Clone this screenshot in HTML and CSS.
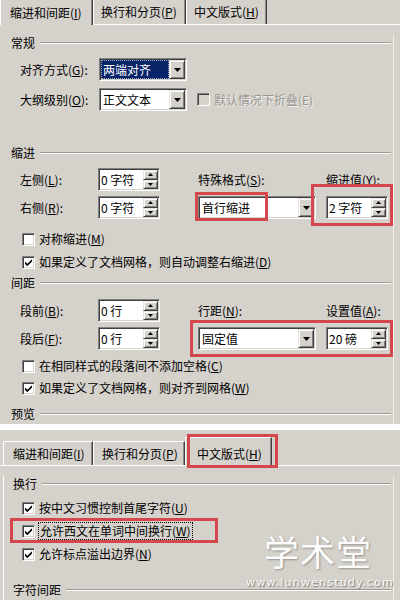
FILE: index.html
```html
<!DOCTYPE html>
<html lang="zh-CN">
<head>
    <meta charset="UTF-8">
    <meta name="viewport" content="width=device-width, initial-scale=1.0">
    <title>段落</title>
    <link rel="stylesheet" href="styles.css">
</head>
<body>
    <div class="dialog dialog-top">
        <div class="tabs tabs-cut">
            <div class="tab tab-first active"><span>缩进和间距(<u>I</u>)</span></div>
            <div class="tab tab-second"><span>换行和分页(<u>P</u>)</span></div>
            <div class="tab tab-third"><span>中文版式(<u>H</u>)</span></div>
        </div>
        <div class="page">
            <div class="group group-general">常规</div>
            <div class="general">
                <span class="label">对齐方式(<u>G</u>):</span>
                <div class="field select select-short">
                    <span class="value selected">两端对齐</span>
                    <span class="btn drop"><svg width="7" height="4" viewBox="0 0 7 4"><path d="M0 0h7L3.5 4z"/></svg></span>
                </div>
                <span></span>
                <span class="label">大纲级别(<u>O</u>):</span>
                <div class="field select select-short">
                    <span class="value">正文文本</span>
                    <span class="btn drop"><svg width="7" height="4" viewBox="0 0 7 4"><path d="M0 0h7L3.5 4z"/></svg></span>
                </div>
                <div class="check disabled"><span class="box"></span><span>默认情况下折叠(E)</span></div>
            </div>

            <div class="group group-indent">缩进</div>
            <div class="grid grid-indent">
                <span class="label c1">左侧(<u>L</u>):</span>
                <div class="field spin c2">
                    <span class="value">0 字符</span>
                    <span class="spin-btns">
                        <span class="btn"><svg width="5" height="3" viewBox="0 0 5 3"><path d="M0 3h5L2.5 0z"/></svg></span>
                        <span class="btn"><svg width="5" height="3" viewBox="0 0 5 3"><path d="M0 0h5L2.5 3z"/></svg></span>
                    </span>
                </div>
                <span class="label c4">特殊格式(<u>S</u>):</span>
                <span class="label c6">缩进值(<u>Y</u>):</span>

                <span class="label c1">右侧(<u>R</u>):</span>
                <div class="field spin c2">
                    <span class="value">0 字符</span>
                    <span class="spin-btns">
                        <span class="btn"><svg width="5" height="3" viewBox="0 0 5 3"><path d="M0 3h5L2.5 0z"/></svg></span>
                        <span class="btn"><svg width="5" height="3" viewBox="0 0 5 3"><path d="M0 0h5L2.5 3z"/></svg></span>
                    </span>
                </div>
                <div class="field select c4">
                    <span class="value">首行缩进</span>
                    <span class="btn drop"><svg width="7" height="4" viewBox="0 0 7 4"><path d="M0 0h7L3.5 4z"/></svg></span>
                </div>
                <div class="field spin c6">
                    <span class="value">2 字符</span>
                    <span class="spin-btns">
                        <span class="btn"><svg width="5" height="3" viewBox="0 0 5 3"><path d="M0 3h5L2.5 0z"/></svg></span>
                        <span class="btn"><svg width="5" height="3" viewBox="0 0 5 3"><path d="M0 0h5L2.5 3z"/></svg></span>
                    </span>
                </div>
            </div>
            <div class="checks checks-indent">
                <div class="check"><span class="box"></span><span>对称缩进(<u>M</u>)</span></div>
                <div class="check"><span class="box"><svg width="7" height="7" viewBox="0 0 7 7"><path d="M0 2.5l2.3 2.3L7 0.3v2.2L2.3 7.2 0 4.9z"/></svg></span><span>如果定义了文档网格，则自动调整右缩进(<u>D</u>)</span></div>
            </div>

            <div class="group group-spacing">间距</div>
            <div class="grid grid-spacing">
                <span class="label c1">段前(<u>B</u>):</span>
                <div class="field spin c2">
                    <span class="value">0 行</span>
                    <span class="spin-btns">
                        <span class="btn"><svg width="5" height="3" viewBox="0 0 5 3"><path d="M0 3h5L2.5 0z"/></svg></span>
                        <span class="btn"><svg width="5" height="3" viewBox="0 0 5 3"><path d="M0 0h5L2.5 3z"/></svg></span>
                    </span>
                </div>
                <span class="label c4">行距(<u>N</u>):</span>
                <span class="label c6">设置值(<u>A</u>):</span>

                <span class="label c1">段后(<u>F</u>):</span>
                <div class="field spin c2">
                    <span class="value">0 行</span>
                    <span class="spin-btns">
                        <span class="btn"><svg width="5" height="3" viewBox="0 0 5 3"><path d="M0 3h5L2.5 0z"/></svg></span>
                        <span class="btn"><svg width="5" height="3" viewBox="0 0 5 3"><path d="M0 0h5L2.5 3z"/></svg></span>
                    </span>
                </div>
                <div class="field select c4">
                    <span class="value">固定值</span>
                    <span class="btn drop"><svg width="7" height="4" viewBox="0 0 7 4"><path d="M0 0h7L3.5 4z"/></svg></span>
                </div>
                <div class="field spin c6">
                    <span class="value">20 磅</span>
                    <span class="spin-btns">
                        <span class="btn"><svg width="5" height="3" viewBox="0 0 5 3"><path d="M0 3h5L2.5 0z"/></svg></span>
                        <span class="btn"><svg width="5" height="3" viewBox="0 0 5 3"><path d="M0 0h5L2.5 3z"/></svg></span>
                    </span>
                </div>
            </div>
            <div class="checks checks-spacing">
                <div class="check"><span class="box"></span><span>在相同样式的段落间不添加空格(<u>C</u>)</span></div>
                <div class="check"><span class="box"><svg width="7" height="7" viewBox="0 0 7 7"><path d="M0 2.5l2.3 2.3L7 0.3v2.2L2.3 7.2 0 4.9z"/></svg></span><span>如果定义了文档网格，则对齐到网格(<u>W</u>)</span></div>
            </div>

            <div class="group group-preview">预览</div>
        </div>

        <div class="mark mark-special"></div>
        <div class="mark mark-value"></div>
        <div class="mark mark-line"></div>
    </div>

    <div class="dialog dialog-bottom">
        <div class="tabs">
            <div class="tab tab-first"><span>缩进和间距(<u>I</u>)</span></div>
            <div class="tab tab-second"><span>换行和分页(<u>P</u>)</span></div>
            <div class="tab tab-third active"><span>中文版式(<u>H</u>)</span></div>
        </div>
        <div class="page">
            <div class="group group-wrap">换行</div>
            <div class="checks checks-wrap">
                <div class="check"><span class="box"><svg width="7" height="7" viewBox="0 0 7 7"><path d="M0 2.5l2.3 2.3L7 0.3v2.2L2.3 7.2 0 4.9z"/></svg></span><span>按中文习惯控制首尾字符(<u>U</u>)</span></div>
                <div class="check"><span class="box"><svg width="7" height="7" viewBox="0 0 7 7"><path d="M0 2.5l2.3 2.3L7 0.3v2.2L2.3 7.2 0 4.9z"/></svg></span><span class="focus">允许西文在单词中间换行(<u>W</u>)</span></div>
                <div class="check"><span class="box"><svg width="7" height="7" viewBox="0 0 7 7"><path d="M0 2.5l2.3 2.3L7 0.3v2.2L2.3 7.2 0 4.9z"/></svg></span><span>允许标点溢出边界(<u>N</u>)</span></div>
            </div>
            <div class="group group-char">字符间距</div>
        </div>

        <div class="mark mark-tab"></div>
        <div class="mark mark-wrap"></div>

        <div class="watermark">
            <div class="watermark-title">学术堂</div>
            <div class="watermark-url">www.lunwenstudy.com</div>
        </div>
    </div>
</body>
</html>
```

FILE: styles.css
```css
body {
    margin: 0;
    width: 400px;
    background-color: white;
    font-family: "Noto Sans CJK SC", "Noto Sans", sans-serif;
    font-size: 12px;
    line-height: 16px;
    color: #000;
}

u {
    text-decoration: underline;
    text-underline-offset: 1px;
}

.dialog {
    position: relative;
    background-color: #d5d2cc;
    overflow: hidden;
}

.dialog-top {
    height: 424px;
}

.dialog-bottom {
    height: 170px;
    margin-top: 6px;
    padding-top: 7px;
    box-sizing: border-box;
}

/* tabs */

.tabs {
    display: flex;
    align-items: flex-end;
    height: 25px;
    box-shadow: inset 0 -1px #fff;
}

.dialog-bottom .tabs {
    height: 29px;
    padding-left: 3px;
}

.tab {
    box-sizing: border-box;
    height: 24px;
    margin-bottom: 1px;
    display: flex;
    align-items: center;
    white-space: nowrap;
    background-color: #d5d2cc;
    border-top: 1px solid #fff;
    border-left: 1px solid #fff;
    border-right: 1px solid #404040;
    box-shadow: inset -1px 0 #8d8a85;
}

.tabs-cut .tab {
    border-top: none;
}

.tab.active {
    height: 25px;
    margin-bottom: 0;
}

.dialog-bottom .tab.active {
    height: 29px;
    padding-top: 3px;
}

.tabs-cut .tab-first { width: 93px; padding-left: 9px; }
.tabs-cut .tab-second { width: 93px; padding-left: 7px; }
.tabs-cut .tab-third { width: 81px; padding-left: 7px; }

.dialog-bottom .tab-first { width: 90px; padding-left: 9px; }
.dialog-bottom .tab-second { width: 92px; padding-left: 8px; }
.dialog-bottom .tab-third { width: 87px; padding-left: 11px; }

/* page */

.page {
    margin-right: 6px;
    border-right: 1px solid #f0eee9;
    height: 100%;
}

.dialog-bottom .page {
    margin-left: 3px;
    border-left: 1px solid #fff;
}

.group {
    display: flex;
    align-items: center;
    height: 16px;
    padding-left: 11px;
    padding-right: 2px;
    gap: 5px;
}

.group::after {
    content: "";
    flex: 1;
    border-top: 1px solid #9c9993;
    border-bottom: 1px solid #fff;
}

.dialog-bottom .group {
    padding-left: 9px;
}

.group-general { margin-top: 10px; }
.group-indent { margin-top: 34px; }
.group-spacing { margin-top: 5px; }
.group-preview { margin-top: 10px; }
.group-wrap { margin-top: 10px; }
.group-char { margin-top: 20px; }

.label {
    white-space: nowrap;
}

/* form rows */

.general {
    display: grid;
    grid-template-columns: 79px 88px auto;
    grid-auto-rows: 23px;
    row-gap: 7px;
    align-items: center;
    padding-left: 20px;
    margin-top: 7px;
}

.general .check {
    margin-left: 10px;
}

.grid {
    display: grid;
    grid-template-columns: 78px 62px 38px 118px 10px 62px;
    grid-auto-rows: 23px;
    row-gap: 5px;
    align-items: center;
    padding-left: 20px;
    margin-top: 7px;
}

.grid-spacing {
    margin-top: 8px;
}

.c1 { grid-column: 1; }
.c2 { grid-column: 2; }
.c4 { grid-column: 4; }
.c6 { grid-column: 6; }

/* sunken fields */

.field {
    box-sizing: border-box;
    height: 23px;
    padding: 1px;
    display: flex;
    background-color: #fff;
    border: 1px solid;
    border-color: #808080 #fff #fff #808080;
    box-shadow: inset 1px 1px #404040, inset -1px -1px #d5d2cc;
}

.field .value {
    flex: 1;
    line-height: 19px;
    padding-left: 2px;
    white-space: nowrap;
}

.select-short {
    width: 88px;
}

.value.selected {
    background-color: #0a246a;
    color: #fff;
    outline: 1px dotted #9aa4c4;
    outline-offset: -1px;
}

.spin .value {
    padding-left: 1px;
}

.btn {
    box-sizing: border-box;
    display: flex;
    align-items: center;
    justify-content: center;
    background-color: #d5d2cc;
    border: 1px solid;
    border-color: #e6e3de #404040 #404040 #e6e3de;
    box-shadow: inset 1px 1px #fff, inset -1px -1px #808080;
}

.drop {
    width: 16px;
}

.spin-btns {
    width: 15px;
    display: flex;
    flex-direction: column;
}

.spin-btns .btn {
    flex: 1;
}

/* checkboxes */

.checks {
    display: flex;
    flex-direction: column;
    gap: 7px;
    padding-left: 22px;
}

.checks-indent { margin-top: 12px; }
.checks-spacing { margin-top: 8px; gap: 6px; }
.checks-wrap { margin-top: 8px; padding-left: 18px; }

.check {
    display: flex;
    align-items: center;
    gap: 4px;
    height: 16px;
    white-space: nowrap;
}

.box {
    box-sizing: border-box;
    flex: none;
    width: 13px;
    height: 13px;
    display: flex;
    align-items: center;
    justify-content: center;
    background-color: #fff;
    border: 1px solid;
    border-color: #808080 #fff #fff #808080;
    box-shadow: inset 1px 1px #404040, inset -1px -1px #d5d2cc;
}

.check.disabled {
    color: #9a978f;
    text-shadow: 1px 1px 0 rgba(255, 255, 255, 0.7);
}

.check.disabled .box {
    background-color: #d5d2cc;
}

.focus {
    padding: 0 1px;
    outline: 1px dotted #000;
}

/* red annotation boxes */

.mark {
    position: absolute;
    box-sizing: border-box;
    border: 3px solid #d3474d;
}

.mark-special { left: 195px; top: 192px; width: 73px; height: 29px; }
.mark-value { left: 311px; top: 184px; width: 82px; height: 42px; }
.mark-line { left: 190px; top: 320px; width: 203px; height: 37px; }
.mark-tab { left: 187px; top: 4px; width: 91px; height: 34px; }
.mark-wrap { left: 10px; top: 88px; width: 208px; height: 25px; }

/* watermark */

.watermark {
    position: absolute;
    left: 246px;
    top: 95px;
    width: 144px;
    text-align: center;
    color: #fbfbfb;
}

.watermark-title {
    font-size: 35px;
    line-height: 51px;
    letter-spacing: 1px;
    text-shadow: 1px 1px 2px rgba(0, 0, 0, 0.3);
}

.watermark-url {
    font-family: "DejaVu Sans", sans-serif;
    font-size: 11px;
    line-height: 13px;
    letter-spacing: 1.2px;
    text-shadow: 1px 1px 1px rgba(0, 0, 0, 0.45);
}
```
